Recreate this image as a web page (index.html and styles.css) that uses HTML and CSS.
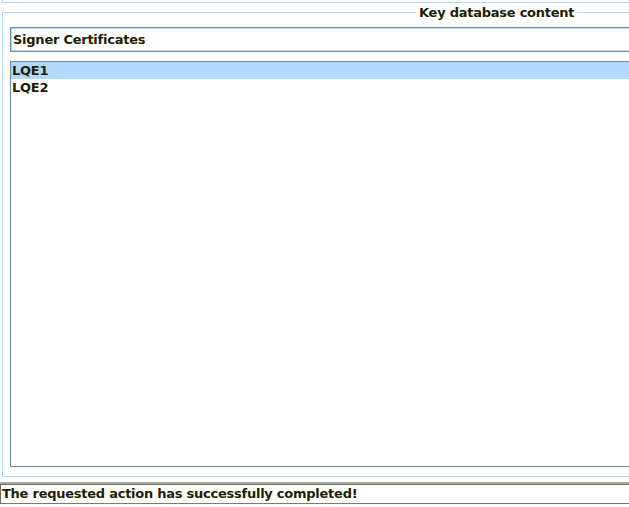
FILE: index.html
```html
<!DOCTYPE html>
<html>
<head>
<meta charset="utf-8">
<link rel="stylesheet" href="styles.css">
</head>
<body>
<div class="top-panel"></div>
<div class="group">
  <div class="legend">Key database content</div>
  <div class="combo">Signer Certificates</div>
  <div class="list">
    <div class="row selected">LQE1</div>
    <div class="row">LQE2</div>
  </div>
</div>
<div class="status"><div class="status-inner">The requested action has successfully completed!</div></div>
</body>
</html>
```

FILE: styles.css
```css
html, body {
  margin: 0;
  padding: 0;
  width: 629px;
  height: 507px;
  overflow: hidden;
  background: #ffffff;
}
body {
  font-family: "DejaVu Sans", Verdana, sans-serif;
  font-weight: bold;
  font-size: 13px;
  letter-spacing: -0.25px;
  color: #1e1e00;
}
.top-panel {
  margin-left: 2px;
  height: 2px;
  border-left: 1px solid #b3d7f7;
  border-bottom: 1px solid #b3d7f7;
}
.group {
  position: relative;
  margin-top: 9px;
  margin-left: 2px;
  border: 1px solid #b3d7f7;
  border-right: none;
  padding: 14px 0 9px 7px;
}
.legend {
  position: absolute;
  top: -8px;
  left: 413px;
  padding: 0 3px;
  background: #ffffff;
  line-height: 15px;
}
.combo {
  height: 23px;
  line-height: 23px;
  border: 1px solid #6b8ca8;
  border-right: none;
  box-shadow: inset 0 1px 0 #b3d7f7, inset 1px 0 0 #b3d7f7, inset 0 -1px 0 #b3d7f7;
  padding-left: 2px;
}
.list {
  margin-top: 9px;
  height: 404px;
  border: 1px solid #6b8ca8;
  border-right: none;
}
.row {
  height: 17px;
  line-height: 17px;
  padding-left: 1px;
}
.row.selected {
  background: #b4d8fc;
}
.status {
  margin-top: 5px;
  border-top: 2px solid #a9a99b;
}
.status-inner {
  border-top: 1px solid #6e6e58;
  border-left: 1px solid #6e6e58;
  border-bottom: 1px solid #7c7c66;
  height: 18px;
  line-height: 17px;
  padding-left: 1px;
}
```
